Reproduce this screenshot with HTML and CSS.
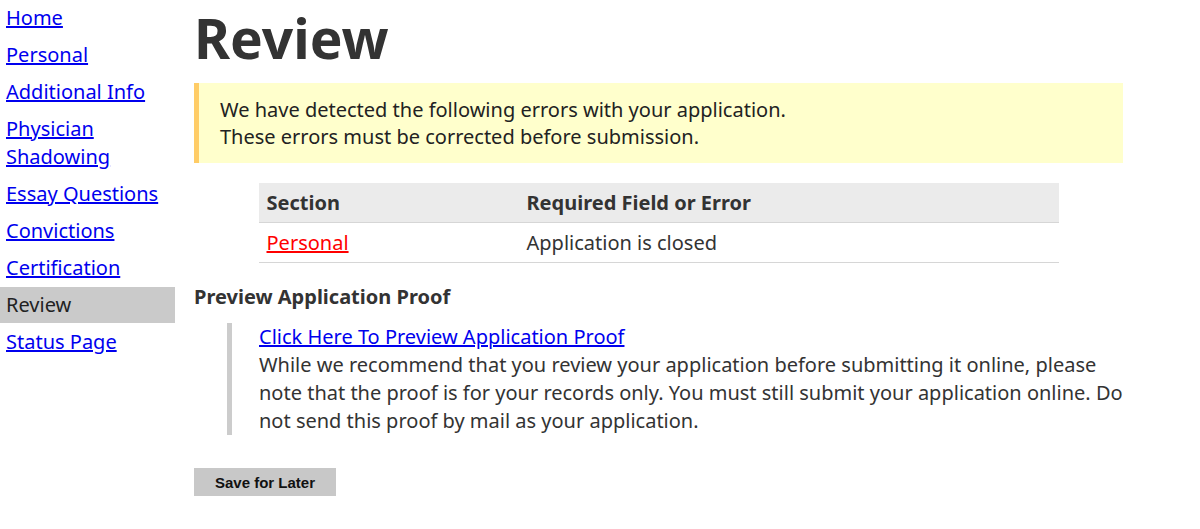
FILE: index.html
```html
<!DOCTYPE html>
<html lang="en">
<head>
  <meta charset="UTF-8">
  <meta name="viewport" content="width=device-width, initial-scale=1.0">
  <title>Review</title>
  <link rel="stylesheet" href="styles.css">
</head>
<body>
  <div class="layout">
    <nav class="sidebar">
      <a href="#">Home</a>
      <a href="#">Personal</a>
      <a href="#">Additional Info</a>
      <a href="#">Physician Shadowing</a>
      <a href="#">Essay Questions</a>
      <a href="#">Convictions</a>
      <a href="#">Certification</a>
      <a href="#" class="current">Review</a>
      <a href="#">Status Page</a>
    </nav>
    <main class="content">
      <h1>Review</h1>
      <div class="alert">
        We have detected the following errors with your application.<br>
        These errors must be corrected before submission.
      </div>
      <table class="errors">
        <thead>
          <tr><th class="col-section">Section</th><th>Required Field or Error</th></tr>
        </thead>
        <tbody>
          <tr><td><a href="#" class="error-link">Personal</a></td><td>Application is closed</td></tr>
        </tbody>
      </table>
      <h2>Preview Application Proof</h2>
      <blockquote class="proof">
        <a href="#">Click Here To Preview Application Proof</a><br>
        While we recommend that you review your application before submitting it online, please note that the proof is for your records only. You must still submit your application online. Do not send this proof by mail as your application.
      </blockquote>
      <button class="save">Save for Later</button>
    </main>
  </div>
</body>
</html>
```

FILE: styles.css
```css
body { margin: 0; font-family: "Noto Sans", sans-serif; font-size: 20px; color: #333; background: #fff; }
.layout { display: flex; }
.sidebar { width: 175px; flex: none; }
.sidebar a { display: block; padding: 4px 6px; margin-bottom: 1px; line-height: 28px; color: #0000ee; }
.sidebar a.current { background: #cacaca; color: #222; text-decoration: none; }
.content { width: 929px; padding-left: 19px; }
h1 { font-size: 55px; line-height: 75px; margin: 0 0 8px; font-weight: 700; color: #333; }
.alert { background: #ffffcc; border-left: 5px solid #ffcc66; padding: 13px 21px; line-height: 27px; color: #222; }
.errors { width: 800px; margin: 20px auto 0; border-collapse: collapse; line-height: 29px; }
.errors th { background: #ebebeb; text-align: left; padding: 5px 8px; font-weight: 700; border-bottom: 1px solid #d6d6d6; }
.errors td { padding: 5px 8px; border-bottom: 1px solid #d6d6d6; }
.errors .col-section { width: 244px; }
.error-link { color: #ff0000; }
h2 { font-size: 20px; line-height: 28px; margin: 20px 0 12px; font-weight: 700; }
.proof { margin: 0 0 0 33px; border-left: 5px solid #cccccc; padding-left: 27px; line-height: 28px; }
.proof a { color: #0000ee; }
.save { margin-top: 33px; font-family: "Liberation Sans", Arial, sans-serif; font-size: 15px; font-weight: 700; color: #111; background: #c8c8c8; border: none; padding: 0; width: 142px; height: 28px; white-space: nowrap; }
```
